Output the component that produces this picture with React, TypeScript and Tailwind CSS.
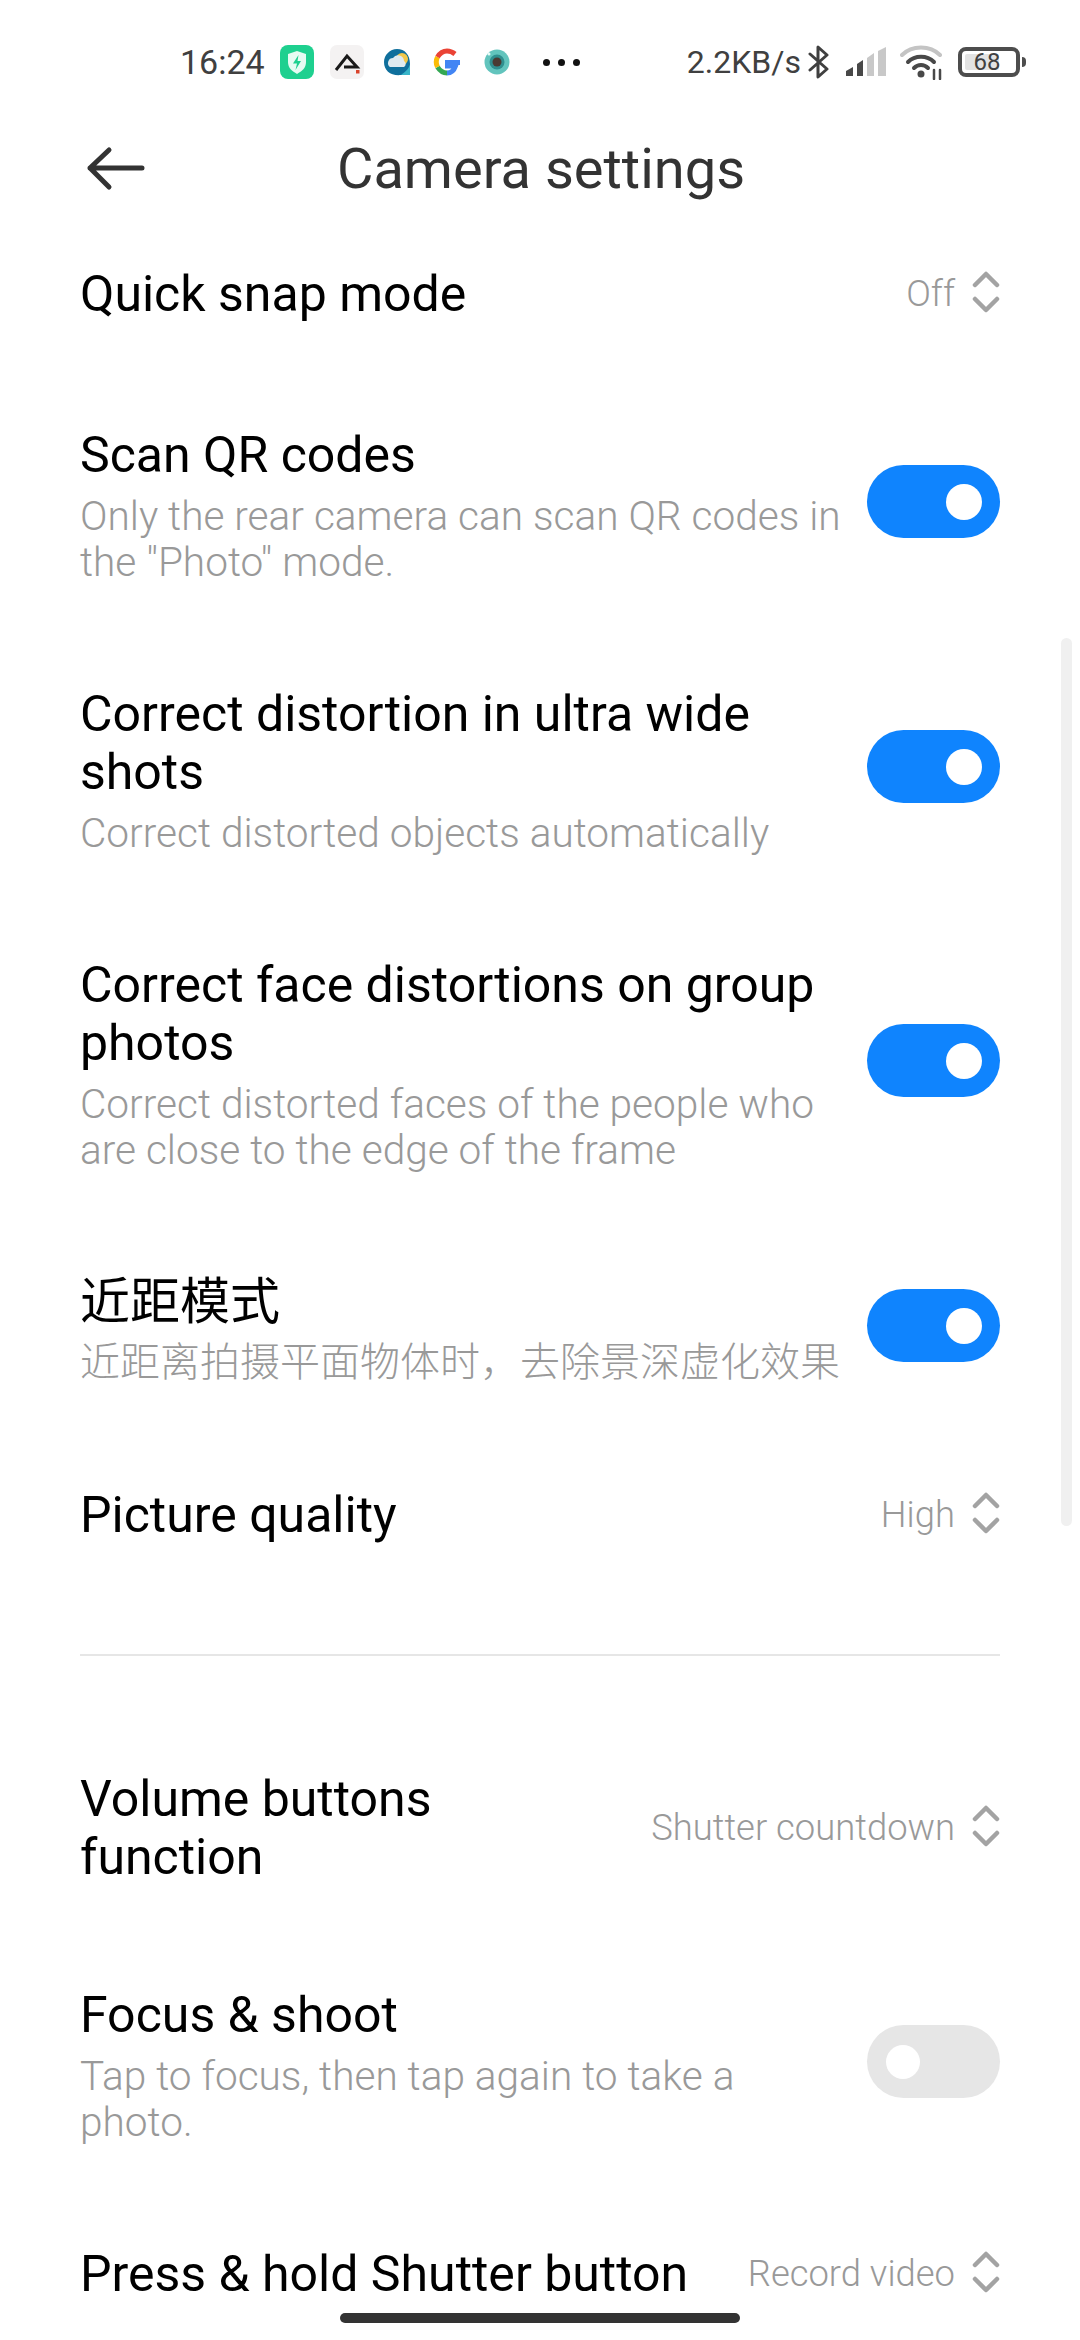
import React from "react";

function Updown() {
  return (
    <svg width="28" height="42" viewBox="0 0 28 42" fill="none" stroke="#a3a3a3" strokeWidth="4.500" strokeLinecap="round" strokeLinejoin="round" className="mb-[5px] shrink-0">
      <path d="M3 14 L14 3 L25 14" />
      <path d="M3 28 L14 39 L25 28" />
    </svg>
  );
}

function Toggle({ on }: { on: boolean }) {
  return on ? (
    <div className="mb-[8px] flex h-[73px] w-[133px] shrink-0 items-center justify-end rounded-full bg-[#0f84fe] pr-[18px]">
      <div className="h-[36px] w-[36px] rounded-full bg-white" />
    </div>
  ) : (
    <div className="mb-[8px] flex h-[73px] w-[133px] shrink-0 items-center justify-start rounded-full bg-[#e6e6e6] pl-[19px]">
      <div className="h-[34px] w-[34px] rounded-full bg-white" />
    </div>
  );
}

function ToggleRow({ title, sub, on, subSize }: { title: React.ReactNode; sub: React.ReactNode; on: boolean; subSize?: string }) {
  return (
    <div className="flex items-center justify-between py-[50px]">
      <div className="w-[765px]">
        <div className="pr-[30px] text-[50px] leading-[58px] text-black">{title}</div>
        <div className={`mt-[9px] font-light leading-[46px] text-[#999999] ${subSize ?? "text-[40.6px]"}`}>{sub}</div>
      </div>
      <Toggle on={on} />
    </div>
  );
}

function SelectRow({ title, value, extra }: { title: React.ReactNode; value: string; extra?: string }) {
  return (
    <div className={`flex items-center justify-between pt-[50px] ${extra ?? "pb-[50px]"}`}>
      <div className="text-[50px] leading-[58px] text-black">{title}</div>
      <div className="flex items-center gap-[17px]">
        <span className="text-[36.4px] font-light leading-[44px] text-[#999999]">{value}</span>
        <Updown />
      </div>
    </div>
  );
}

function StatusBar() {
  return (
    <div className="flex h-[100px] items-center pl-[180px] pr-[54px] pt-[24px] text-[#404040]">
      <span className="text-[34px] leading-[40px]">16:24</span>
      <div className="ml-[15px] flex items-center gap-[16px]">
        <svg width="34" height="34" viewBox="0 0 34 34">
          <rect width="34" height="34" rx="8" fill="#1ed08f" />
          <path d="M17 6 L26 9 V17 C26 23 22 26 17 29 C12 26 8 23 8 17 V9 Z" fill="#e6fbf2" />
          <path d="M18.500 10 L13 18.500 H17 L15.500 25 L21 16 H17.500 Z" fill="#1ed08f" />
        </svg>
        <svg width="34" height="34" viewBox="0 0 34 34">
          <rect width="34" height="34" rx="7" fill="#f4f2f2" />
          <path d="M6 25 L17 11 L27 22 H14" fill="none" stroke="#1a1a1a" strokeWidth="3" />
          <rect x="26" y="25" width="3.500" height="3.500" fill="#d9432b" />
        </svg>
        <svg width="34" height="34" viewBox="0 0 34 34">
          <rect width="34" height="34" rx="7" fill="#fff" />
          <path d="M17 4 C25 4 30 10 30 19 V30 H21 C11 31 4 26 4 17 C4 10 10 4 17 4 Z" fill="#0f6f9c" />
          <path d="M21 30 C25 27 29 24 30 19 V30 Z" fill="#39b5c9" />
          <circle cx="22" cy="14" r="6" fill="#f2c84b" />
          <path d="M10 22 a5 5 0 0 1 3 -9 a6 6 0 0 1 11 3 a3.500 3.500 0 0 1 0 6 Z" fill="#dfeaf0" />
        </svg>
        <svg width="34" height="34" viewBox="0 0 34 34">
          <path d="M30 17.500 H17.500 V21 H25.500 C24 25.500 21 28 17 28" fill="none" stroke="#4285f4" strokeWidth="5" />
          <path d="M17 28 C13 28 10 26 7.500 22" fill="none" stroke="#34a853" strokeWidth="5" />
          <path d="M7.500 22 C6 19 6 15 7.500 12" fill="none" stroke="#fbbc05" strokeWidth="5" />
          <path d="M7.500 12 C10 8 13 6 17 6 C20 6 22.500 7 25 9" fill="none" stroke="#ea4335" strokeWidth="5" />
        </svg>
        <svg width="34" height="34" viewBox="0 0 34 34">
          <circle cx="17" cy="17" r="12.500" fill="#62c4bd" />
          <circle cx="17" cy="17" r="7.500" fill="#2f8f8f" />
          <circle cx="17" cy="17" r="4.500" fill="#4a3a32" />
          <circle cx="9" cy="9" r="1.500" fill="#e6fbf8" />
        </svg>
      </div>
      <div className="ml-[29px] flex items-center gap-[8px]">
        <div className="h-[7px] w-[7px] rounded-full bg-[#111]" />
        <div className="h-[7px] w-[7px] rounded-full bg-[#111]" />
        <div className="h-[7px] w-[7px] rounded-full bg-[#111]" />
      </div>
      <div className="flex-1" />
      <span className="text-[32px] leading-[40px]">2.2KB/s</span>
      <svg className="ml-[7px]" width="22" height="36" viewBox="0 0 22 36" fill="none" stroke="#404040" strokeWidth="3" strokeLinejoin="round" strokeLinecap="round">
        <path d="M2 10 L19 25 L10 33 V3 L19 11 L2 26" />
      </svg>
      <svg className="ml-[16px]" width="40" height="30" viewBox="0 0 40 30">
        <path d="M0 29 V24 L7 20 V29 Z" fill="#484848" />
        <path d="M11 29 V17 L17 13 V29 Z" fill="#484848" />
        <path d="M21 29 V11 L28 6 V29 Z" fill="#c8c8c8" />
        <path d="M32 29 V4 L40 0 V29 Z" fill="#c8c8c8" />
      </svg>
      <svg className="ml-[14px]" width="44" height="36" viewBox="0 0 44 36" fill="none" strokeLinecap="round">
        <path d="M2 11 C12 1 30 1 40 11" stroke="#c4c4c4" strokeWidth="4" />
        <path d="M8 18 C15 11 27 11 34 18" stroke="#484848" strokeWidth="4" />
        <path d="M14 24 C18 20 24 20 28 24" stroke="#484848" strokeWidth="4" />
        <circle cx="21" cy="30" r="3.500" fill="#484848" />
        <path d="M34 26 V35 M40 26 V35" stroke="#484848" strokeWidth="2.500" />
      </svg>
      <div className="ml-[14px] flex items-center">
        <div className="relative flex h-[30px] w-[62px] items-center rounded-[8px] border-[4px] border-[#4d4d4d] p-[3px]">
          <div className="h-full w-[70%] rounded-[2px] bg-[#e3e3e3]" />
          <span className="absolute inset-0 flex items-center justify-center pr-[4px] text-[24px] leading-[22px] text-[#404040]">68</span>
        </div>
        <div className="ml-[2px] h-[10px] w-[4px] rounded-r-full bg-[#4d4d4d]" />
      </div>
    </div>
  );
}

export default function App() {
  return (
    <div className="relative h-[2340px] w-[1080px] overflow-hidden bg-white font-['Roboto','Noto_Sans_CJK_SC',sans-serif]">
      <StatusBar />
      <div className="relative flex h-[115px] items-center justify-center pl-[2px] pt-[22px]">
        <svg className="absolute left-[84px] top-[43px]" width="64" height="50" viewBox="0 0 64 50" fill="none" stroke="#333" strokeWidth="5" strokeLinecap="round" strokeLinejoin="round">
          <path d="M25 7 L6 25 L25 44 M6 25 H58" />
        </svg>
        <h1 className="text-[56px] font-normal leading-[60px] text-[#333]">Camera settings</h1>
      </div>
      <div className="px-[80px]">
        <SelectRow title="Quick snap mode" value="Off" extra="pb-[53px]" />
        <ToggleRow on title="Scan QR codes" sub={<>Only the rear camera can scan QR codes in the "Photo" mode.</>} />
        <ToggleRow on title="Correct distortion in ultra wide shots" sub="Correct distorted objects automatically" />
        <ToggleRow on title="Correct face distortions on group photos" sub="Correct distorted faces of the people who are close to the edge of the frame" />
        <ToggleRow on title="近距模式" subSize="text-[40px]" sub="近距离拍摄平面物体时，去除景深虚化效果" />
        <SelectRow title="Picture quality" value="High" />
        <div className="mb-[64px] mt-[60px] h-[2px] bg-[#e6e6e6]" />
        <SelectRow title={<>Volume buttons<br />function</>} value="Shutter countdown" />
        <ToggleRow on={false} title="Focus & shoot" sub="Tap to focus, then tap again to take a photo." />
        <SelectRow title="Press & hold Shutter button" value="Record video" />
      </div>
      <div className="absolute left-[1061px] top-[638px] h-[888px] w-[11px] rounded-full bg-[#f0f0f0]" />
      <div className="absolute bottom-[17px] left-[340px] h-[10px] w-[400px] rounded-full bg-[#333]" />
    </div>
  );
}
